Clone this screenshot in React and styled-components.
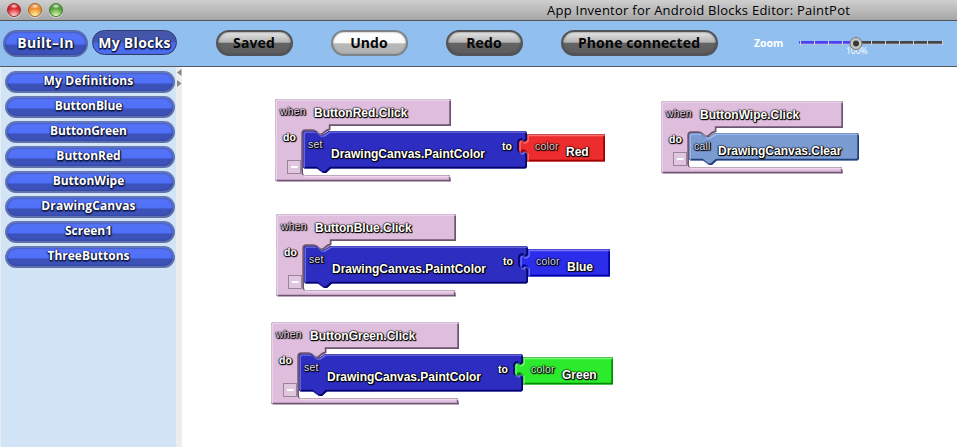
import React, { useId } from "react";
import styled, { createGlobalStyle, css } from "styled-components";

const Global = createGlobalStyle`
  * { box-sizing: border-box; }
  body { margin: 0; background: #fff; }
`;

const Window = styled.div`
  width: 957px;
  height: 447px;
  display: flex;
  flex-direction: column;
  overflow: hidden;
  background: #fff;
  font-family: "Open Sans", "Noto Sans", sans-serif;
  white-space: nowrap;
`;

const TitleBar = styled.header`
  height: 21px;
  flex: none;
  display: flex;
  align-items: center;
  background: linear-gradient(#cfcfcf, #a6a6a6);
  border-bottom: 1px solid #555;
`;

const Lights = styled.div`
  display: flex;
  gap: 7px;
  padding-left: 7px;
  width: 547px;
`;

const Light = styled.span`
  width: 14px;
  height: 14px;
  border-radius: 50%;
  border: 1px solid ${(p) => p.$edge};
  background:
    radial-gradient(ellipse 4px 2.5px at 50% 18%, #fffd, #fff0),
    radial-gradient(circle at 50% 100%, ${(p) => p.$glow} 5%, ${(p) => p.$color} 60%);
  box-shadow: 0 1px 0 #d8d8d8;
`;

const Title = styled.h1`
  margin: 0;
  font-size: 13px;
  line-height: 20px;
  font-weight: 400;
  letter-spacing: 0.25px;
  color: #000;
`;

const Toolbar = styled.nav`
  height: 46px;
  flex: none;
  display: flex;
  align-items: flex-start;
  padding: 9px 0 0 3px;
  background: #91bfef;
  border-bottom: 1px solid #555a60;
`;

const whiteHalo = css`
  color: #fff;
  text-shadow: 1px 1px 1px #111a44, 0 1px 1px #111a44, 1px 0 1px #111a44, -1px 0 1px #111a4499, 0 2px 1px #111a4499;
`;

const Tab = styled.button`
  width: 85px;
  height: 27px;
  margin: 0 4px 0 0;
  padding: 0 0 2px;
  border: 2px solid #5c6c9ccc;
  border-radius: 14px;
  font: 700 14px/20px "Open Sans", sans-serif;
  letter-spacing: ${(p) => p.$track || 0}px;
  background: linear-gradient(#5674f6 0, #4f70f8 50%, #3c52b8 58%, #3c52bc) border-box;
  box-shadow: inset 0 0 2px #27357c;
  ${whiteHalo}
  ${(p) => p.$active && css`
    height: 25px;
    border: 1px solid #303a6a;
    padding: 0;
    background: linear-gradient(#4455a6 0, #4457b0 45%, #4d6bed 55%, #4d6df2);
    box-shadow: inset 0 0 2px #4b64c4;
  `}
`;

const Action = styled.button`
  width: ${(p) => p.$w}px;
  height: 26px;
  margin: 0 0 0 ${(p) => p.$gap}px;
  padding: 0 1px 1px 0;
  border: 2px solid ${(p) => (p.$bright ? "#7c8389" : "#505357")};
  border-radius: 13px;
  color: #060606;
  font: 700 14px/20px "Open Sans", sans-serif;
  letter-spacing: 0.1px;
  background: ${(p) => p.$bright
    ? "linear-gradient(#fff 0, #fafafa 48%, #b9b9b9 54%, #b0b0b0)"
    : "linear-gradient(#e6e6e6 0, #b4b4b4 46%, #646464 52%, #5c5c5c)"};
  box-shadow: inset 0 0 2px ${(p) => (p.$bright ? "#888" : "#444")};
`;

const ZoomLabel = styled.span`
  margin: 6px 0 0 36px;
  width: 44px;
  color: #fff;
  font-weight: 700;
  font-size: 10.5px;
  line-height: 15px;
`;

const ZoomControl = styled.div`
  width: 148px;
  height: 30px;
  margin-top: 5px;
  display: grid;
`;

const ZoomTrack = styled.svg`
  grid-area: 1 / 1;
  z-index: 1;
`;

const ZoomValue = styled.span`
  grid-area: 1 / 1;
  padding: 10px 0 0 48px;
  color: #fff;
  font-size: 8.5px;
  line-height: 12px;
`;

const Body = styled.main`
  flex: 1;
  display: flex;
`;

const Sidebar = styled.aside`
  width: 176px;
  padding: 4px 0 0 4px;
  display: flex;
  flex-direction: column;
  gap: 3px;
  background: #d2e5f6;
  border-left: 1px solid #ececec;
`;

const Entry = styled.button`
  width: 170px;
  height: 22px;
  flex: none;
  margin: 0;
  padding: 0 3px 3px 0;
  border: 2px solid #6878a6cc;
  border-radius: 11px;
  background: linear-gradient(#5674f6 0, #4f70f8 53%, #3c52b8 60%, #3c52bc) border-box;
  box-shadow: inset 0 0 2px #27357c;
  font: 700 12px/14px "Open Sans", sans-serif;
  letter-spacing: ${(p) => p.$track}px;
  ${whiteHalo}
`;

const Divider = styled.div`
  width: 6px;
  background: #ededed;
`;

const Workspace = styled.section`
  flex: 1;
  position: relative;
  font-family: "Liberation Sans", Arial, sans-serif;
`;

const Placed = styled.div`
  position: absolute;
  left: ${(p) => p.$x}px;
  top: ${(p) => p.$y}px;
`;

const Shapes = styled.svg`
  display: block;
  overflow: visible;
`;

const Label = styled.span`
  position: absolute;
  left: ${(p) => p.$x}px;
  top: ${(p) => p.$y}px;
  line-height: 14px;
  font-size: 12px;
  font-weight: 700;
  color: #fff;
  text-shadow: 1px 1px 1px #000, 0 1px 1px #000, 1px 0 1px #000, -1px 0 1px #0009, 0 -1px 1px #0006;
`;

const Keyword = styled(Label)`
  font-size: 10.5px;
  font-weight: ${(p) => (p.$bold ? 700 : 400)};
  letter-spacing: ${(p) => (p.$bold ? 0 : 0.2)}px;
  color: ${(p) => p.$color || "#fff"};
`;

function Piece({ d, fill, light, dark, outline = 0.4 }) {
  const id = useId();
  return (
    <g>
      <clipPath id={id}><path d={d} /></clipPath>
      <path d={d} fill={fill} />
      <g clipPath={`url(#${id})`} fill="none">
        <path d={d} stroke={dark} strokeWidth="2" transform="translate(-.7 -.7)" />
        <path d={d} stroke={light} strokeWidth="1.6" transform="translate(1 1)" opacity=".75" />
        <path d={d} stroke={dark} strokeWidth="1.2" opacity={outline} />
      </g>
    </g>
  );
}

const PINK = { fill: "#debddd", light: "#f4e0f3", dark: "#6e5570", outline: 0.12 };
const NAVY = { fill: "#2d2dc2", light: "#8a8aec", dark: "#04046c" };
const STEEL = { fill: "#7b9bd3", light: "#b4ccf4", dark: "#233f78" };

const frame = (w, inner) => {
  const b = 32 + inner;
  return `M1.5 0H${w}V27H55.5V31Q52 32 50 34L48 36H45L42 33.5Q40 32 38 32H31Q28 32 28 35V${b + 4}Q28 ${b + 7} 31 ${b + 7}H${w - 1}L${w} ${b + 13}H1.5L0 ${b + 11.5}V1.5Z`;
};

const command = (w, inner, socket) => {
  const b = 32 + inner;
  const side = socket
    ? `V41Q${w - 4} 45 ${w - 5} 41Q${w - 9} 41 ${w - 8} 47Q${w - 9} 54 ${w - 5} 54Q${w - 4} 50 ${w} 54`
    : "";
  return `M29.5 32H40L45 36H48L54 32H${w - 1.5}L${w} 33.5${side}V${b - 1.5}L${w - 1.5} ${b}H56L51 ${b + 4.5}H48L42 ${b}H29.5L28 ${b - 1.5}V33.5Z`;
};

const plug = (x, w) =>
  `M${x} 35.5H${x + w}V62.5H${x}V54Q${x - 4} 50 ${x - 5} 54Q${x - 9} 54 ${x - 8} 47Q${x - 9} 41 ${x - 5} 41Q${x - 4} 45 ${x} 41Z`;

function Handler({ x, y, w, inner, event, keyword, action, inside, cw, value }) {
  return (
    <Placed $x={x} $y={y}>
      <Shapes width="345" height="84">
        <Piece d={frame(w, inner)} {...PINK} />
        <Piece d={command(cw, inner, value)} {...inside} />
        {value && <Piece d={plug(cw, value.w)} {...value.tone} />}
        <rect x="12.5" y={Math.floor(24 + inner) + 0.5} width="13" height="13" fill="#e1c6e0" stroke="#988598" />
        <path d={`M16 ${Math.floor(31 + inner)}H22.5`} stroke="#fff" strokeWidth="2" />
      </Shapes>
      <Keyword $x={5} $y={5} $color="#e3d3e2">when</Keyword>
      <Label $x={39} $y={7}>{event}</Label>
      <Keyword $x={8} $y={31} $bold>do</Keyword>
      <Keyword $x={33} $y={38} $color="#ddddea">{keyword}</Keyword>
      <Label $x={value ? 56 : 57} $y={value ? 48 : 43}>{action}</Label>
      {value && <Keyword $x={cw - 25} $y={40} $bold>to</Keyword>}
      {value && <Keyword $x={cw + 8} $y={40} $color={value.soft}>color</Keyword>}
      {value && <Label $x={cw + 39} $y={46}>{value.name}</Label>}
    </Placed>
  );
}

const paint = { keyword: "set", action: "DrawingCanvas.PaintColor", inside: NAVY, inner: 37.5, cw: 252 };

const handlers = [
  { x: 93, y: 32, w: 176, event: "ButtonRed.Click", ...paint,
    value: { name: "Red", w: 78, soft: "#e7c2c2", tone: { fill: "#ed2c2d", light: "#ff8a8a", dark: "#9c0000" } } },
  { x: 94, y: 147, w: 180, event: "ButtonBlue.Click", ...paint,
    value: { name: "Blue", w: 82, soft: "#c9c9f4", tone: { fill: "#2c2ceb", light: "#8c8cff", dark: "#0000a0" } } },
  { x: 89, y: 255, w: 188, event: "ButtonGreen.Click", ...paint,
    value: { name: "Green", w: 90, soft: "#c3efc3", tone: { fill: "#2cea2c", light: "#90ff90", dark: "#008a00" } } },
  { x: 479, y: 34, w: 182, event: "ButtonWipe.Click", keyword: "call", action: "DrawingCanvas.Clear",
    inside: STEEL, inner: 27.5, cw: 198 },
];

const drawers = [
  ["My Definitions", 0.2], ["ButtonBlue", -0.1], ["ButtonGreen", -0.1], ["ButtonRed", 0],
  ["ButtonWipe", 0], ["DrawingCanvas", 0.1], ["Screen1", 0], ["ThreeButtons", 0],
];

export default function App() {
  return (
    <Window>
      <Global />
      <TitleBar>
        <Lights>
          <Light $color="#dc262e" $glow="#ffd0d0" $edge="#8d3032" />
          <Light $color="#ee8c2c" $glow="#fff3a6" $edge="#9c682c" />
          <Light $color="#55a03a" $glow="#dcfab0" $edge="#467a36" />
        </Lights>
        <Title>App Inventor for Android Blocks Editor: PaintPot</Title>
      </TitleBar>
      <Toolbar>
        <Tab $track={0.3}>Built–In</Tab>
        <Tab $active $track={0.3}>My Blocks</Tab>
        <Action $w={77} $gap={35}>Saved</Action>
        <Action $w={77} $gap={38} $bright>Undo</Action>
        <Action $w={77} $gap={38}>Redo</Action>
        <Action $w={157} $gap={38}>Phone connected</Action>
        <ZoomLabel>Zoom</ZoomLabel>
        <ZoomControl>
          <ZoomValue>100%</ZoomValue>
          <ZoomTrack width="148" height="28">
            <path d="M1 7.5H54" stroke="#4a40f5" strokeWidth="3" />
            <path d="M54 7.5H145" stroke="#454545" strokeWidth="3" />
            <path d="M1 9.2H145" stroke="#b9bfd0" strokeWidth="1" />
            {[2, 16, 30, 44, 73, 87, 101, 115, 129, 144].map((t) => (
              <path key={t} d={`M${t + 0.5} 5.5V10.5`} stroke="#cfd0da" />
            ))}
            <circle cx="58" cy="8.5" r="6" fill="#c6c6c6" stroke="#747474" />
            <circle cx="58" cy="8.5" r="3" fill="#393939" />
          </ZoomTrack>
        </ZoomControl>
      </Toolbar>
      <Body>
        <Sidebar>
          {drawers.map(([name, track]) => <Entry key={name} $track={track}>{name}</Entry>)}
        </Sidebar>
        <Divider>
          <svg width="6" height="22" fill="#858585">
            <path d="M5.5 2V9L1 5.5ZM1 13L5.5 16.5L1 20Z" />
          </svg>
        </Divider>
        <Workspace>
          {handlers.map((h) => <Handler key={h.event} {...h} />)}
        </Workspace>
      </Body>
    </Window>
  );
}
